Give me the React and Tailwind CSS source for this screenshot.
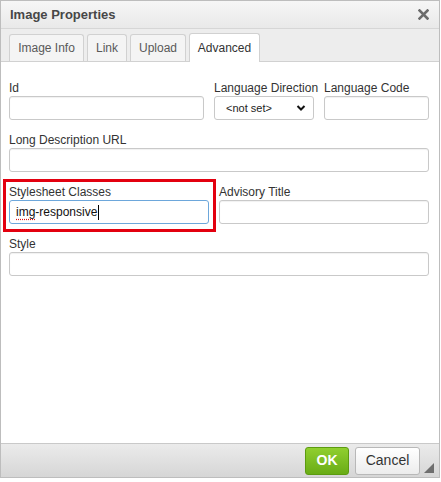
import React from "react";

const Label = ({ children, className = "" }) => (
  <div className={`text-[12px] leading-[14px] text-[#333] mb-px ${className}`}>
    {children}
  </div>
);

const Input = ({ className = "", children }) => (
  <div
    className={`h-[24px] bg-white border border-[#c9c9c9] rounded-[3px] shadow-[inset_0_1px_1px_rgba(0,0,0,0.06)] ${className}`}
  >
    {children}
  </div>
);

export default function App() {
  const tabs = [
    { label: "Image Info", w: "w-[75px]" },
    { label: "Link", w: "w-[40px]" },
    { label: "Upload", w: "w-[56px]" },
  ];

  return (
    <div className="w-[441px] h-[482px] bg-white font-['Liberation_Sans',Arial,sans-serif] overflow-hidden">
      <div className="w-[440px] h-[478px] border border-[#bdbdbd] flex flex-col">
        {/* title bar */}
        <div className="h-[28px] shrink-0 flex items-center justify-between pl-[9px] pr-[10px] bg-linear-to-b from-[#f6f6f6] to-[#e9e9e9] border-b border-[#d6d6d6]">
          <span className="text-[13px] font-bold text-[#474747]">Image Properties</span>
          <svg width="11" height="11" viewBox="0 0 11 11">
            <path
              d="M1.5 1.5 L9.5 9.5 M9.5 1.5 L1.5 9.5"
              stroke="#6b6b6b"
              strokeWidth="2.6"
              strokeLinecap="square"
            />
          </svg>
        </div>

        {/* tabs */}
        <div className="h-[33px] shrink-0 bg-[#ededed] border-b border-[#d1d1d1] flex items-end pl-[8px] gap-[3px]">
          {tabs.map((t) => (
            <div
              key={t.label}
              className={`${t.w} h-[27px] flex items-center justify-center text-[12px] text-[#595959] bg-[#f4f4f4] border border-b-0 border-[#d1d1d1] rounded-t-[3px]`}
            >
              {t.label}
            </div>
          ))}
          <div className="w-[71px] h-[29px] -mb-px flex items-center justify-center text-[12px] text-[#333] bg-white border border-b-0 border-[#d1d1d1] rounded-t-[3px]">
            Advanced
          </div>
        </div>

        {/* content */}
        <div className="flex-1 bg-white px-[8px] pt-[19px]">
          <div className="flex gap-[10px]">
            <div className="w-[195px]">
              <Label>Id</Label>
              <Input />
            </div>
            <div className="w-[100px]">
              <Label className="whitespace-nowrap">Language Direction</Label>
              <div className="h-[24px] bg-white border border-[#c9c9c9] rounded-[3px] flex items-center justify-between pl-[11px] pr-[7px]">
                <span className="text-[11px] text-[#222]">&lt;not set&gt;</span>
                <svg width="10" height="8" viewBox="0 0 10 8">
                  <path d="M1.5 2 L5 5.5 L8.5 2" fill="none" stroke="#111" strokeWidth="2" />
                </svg>
              </div>
            </div>
            <div className="w-[105px]">
              <Label className="whitespace-nowrap">Language Code</Label>
              <Input />
            </div>
          </div>

          <div className="mt-[13px] w-[420px]">
            <Label>Long Description URL</Label>
            <Input />
          </div>

          <div className="flex mt-[7px] -ml-[6px]">
            <div className="w-[213px] h-[53px] border-[3px] border-[#e3000f] pl-[3px] pt-[3px]">
              <Label>Stylesheet Classes</Label>
              <div className="h-[24px] w-[200px] bg-white border border-[#6da7db] rounded-[3px] flex items-center pl-[6px]">
                <span className="text-[12px] text-[#111]">
                  <span className="underline decoration-dotted decoration-[#d11] underline-offset-[3px]">img</span>
                  -responsive
                </span>
                <span className="w-px h-[15px] bg-black ml-px" />
              </div>
            </div>
            <div className="ml-[3px] pt-[6px] w-[210px]">
              <Label>Advisory Title</Label>
              <Input />
            </div>
          </div>

          <div className="mt-[5px] w-[420px]">
            <Label>Style</Label>
            <Input />
          </div>
        </div>

        {/* footer */}
        <div className="h-[34px] shrink-0 bg-linear-to-b from-[#ebebeb] to-[#d6d6d6] border-t border-[#c9c9c9] flex items-center justify-end pr-[19px] gap-[6px] relative">
          <button className="h-[28px] w-[44px] rounded-[3px] border border-[#5c9b10] bg-linear-to-b from-[#90cf2f] to-[#69ac15] text-white text-[14px] font-bold">
            OK
          </button>
          <button className="h-[28px] w-[65px] rounded-[3px] border border-[#b8b8b8] bg-linear-to-b from-[#ffffff] to-[#ececec] text-[#333] text-[14px]">
            Cancel
          </button>
          <svg className="absolute right-[5px] bottom-[4px]" width="10" height="10" viewBox="0 0 10 10">
            <path d="M10 0 L10 10 L0 10 Z" fill="#6f6f6f" />
          </svg>
        </div>
      </div>
    </div>
  );
}
